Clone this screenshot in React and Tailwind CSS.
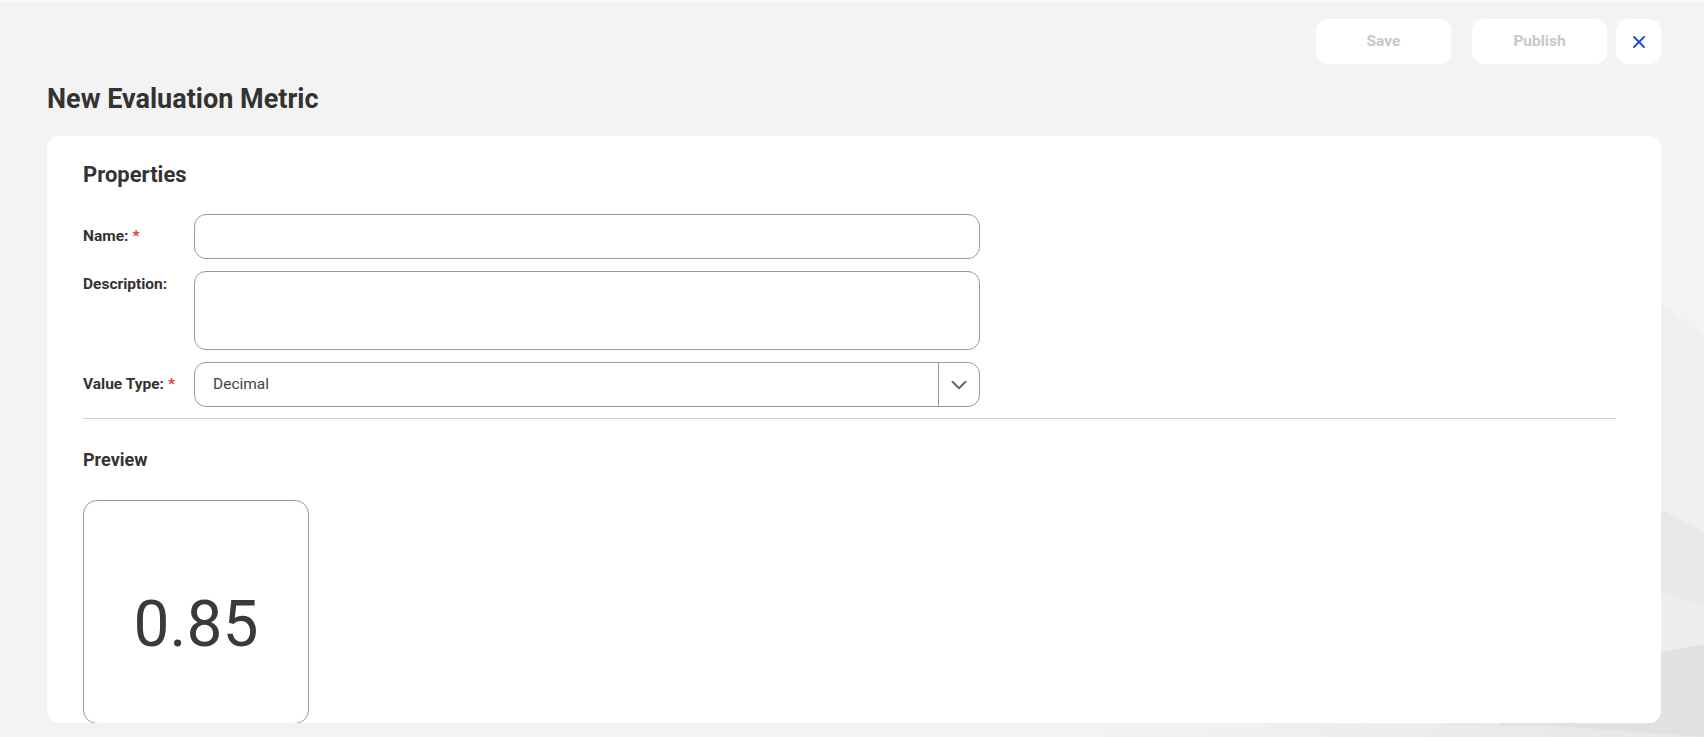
import React, { useState } from 'react';
import { X, ChevronDown } from 'lucide-react';

// Decorative shapes behind the card, only visible on the right edge and bottom
function BackgroundShapes() {
    return (
        <svg className="absolute inset-0 h-[737px] w-[1704px]" viewBox="0 0 1704 737" preserveAspectRatio="none">
            <defs>
                <linearGradient id="bottomFade" x1="0" y1="0" x2="1" y2="0">
                    <stop offset="0" stopColor="#f3f3f3" />
                    <stop offset="1" stopColor="#e6e6e6" />
                </linearGradient>
            </defs>
            <polygon points="1100,700 1704,700 1704,737 1100,737" fill="url(#bottomFade)" />
            <polygon points="1500,190 1704,333 1704,700 1500,700" fill="#efefef" />
            <polygon points="1300,323 1704,530 1704,700 1300,700" fill="#e8e8e8" />
            <polygon points="1300,464 1704,605 1704,700 1300,700" fill="#eeeeee" />
            <polygon points="1500,680 1704,642 1704,735 1555,724 1500,724" fill="#e1e1e1" />
            <polygon points="1555,724 1704,735 1704,737 1555,737" fill="#e8e8e8" />
        </svg>
    );
}

function FieldRow({ label, required, alignTop, children }) {
    return (
        <div className={`flex ${alignTop ? 'items-start' : 'items-center'}`}>
            <label className={`w-[111px] shrink-0 text-[15.5px] font-bold text-[#333] ${alignTop ? 'pt-[2px]' : ''}`}>
                {label}
                {required && <span className="text-[#e53935] ml-1">*</span>}
            </label>
            {children}
        </div>
    );
}

export default function App() {
    const [name, setName] = useState('');
    const [description, setDescription] = useState('');

    return (
        <div className="relative h-[737px] overflow-hidden bg-[#f3f3f3] border-t-2 border-[#f8f8f8] font-['Roboto',sans-serif]">
            <BackgroundShapes />

            <div className="relative pl-[47px] pr-[43px] pt-[17px]">
                {/* Top actions */}
                <div className="flex justify-end items-center">
                    <button className="w-[135px] h-[45px] rounded-xl bg-white text-[15.5px] font-bold text-[#c8c8c8]">Save</button>
                    <button className="ml-[21px] w-[135px] h-[45px] rounded-xl bg-white text-[15.5px] font-bold text-[#c8c8c8]">Publish</button>
                    <button className="ml-[9px] w-[45px] h-[45px] rounded-xl bg-white flex items-center justify-center text-[#1d4fd8]">
                        <X size={20} strokeWidth={2.25} />
                    </button>
                </div>

                <h1 className="mt-[19px] text-[27px] leading-8 font-bold text-[#333]">New Evaluation Metric</h1>

                {/* Main card */}
                <div className="mt-[21px] h-[587px] overflow-hidden rounded-xl bg-white pl-9 pr-[45px] pt-[25px]">
                    <h2 className="text-[22px] leading-7 font-bold text-[#333]">Properties</h2>

                    <div className="mt-[25px] flex flex-col gap-3">
                        <FieldRow label="Name:" required>
                            <input
                                value={name}
                                onChange={(e) => setName(e.target.value)}
                                className="w-[786px] h-[45px] rounded-xl border border-[#9a9a9a] px-4 text-[15.5px] outline-none"
                            />
                        </FieldRow>
                        <FieldRow label="Description:" alignTop>
                            <textarea
                                value={description}
                                onChange={(e) => setDescription(e.target.value)}
                                className="w-[786px] h-[79px] rounded-xl border border-[#9a9a9a] px-4 py-2 text-[15.5px] outline-none resize-none"
                            />
                        </FieldRow>
                        <FieldRow label="Value Type:" required>
                            <div className="w-[786px] h-[45px] rounded-xl border border-[#9a9a9a] flex items-stretch">
                                <div className="flex-1 flex items-center pl-[18px] text-[15.5px] text-[#444]">Decimal</div>
                                <div className="w-[41px] border-l border-[#9a9a9a] flex items-center justify-center text-[#666]">
                                    <ChevronDown size={26} strokeWidth={1.75} />
                                </div>
                            </div>
                        </FieldRow>
                    </div>

                    <div className="mt-[11px] border-t border-[#cfcfcf]" />

                    <h3 className="mt-[29px] text-[18px] leading-6 font-bold text-[#333]">Preview</h3>

                    <div className="mt-[28px] w-[226px] h-[224px] rounded-[14px] border border-[#9a9a9a] flex items-center justify-center pt-[25px]">
                        <span className="text-[64px] font-normal text-[#3a3a3a]">0.85</span>
                    </div>
                </div>
            </div>
        </div>
    );
}
